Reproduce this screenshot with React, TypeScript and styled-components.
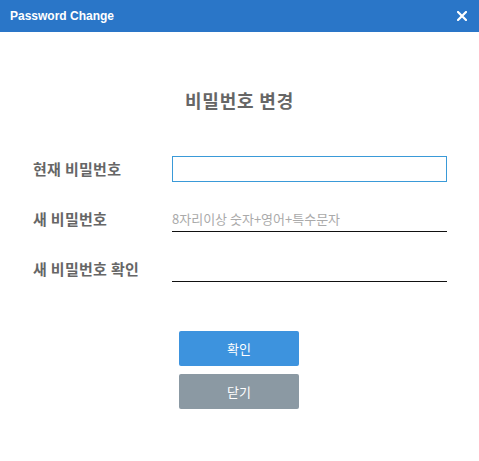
import React from "react";
import styled, { createGlobalStyle } from "styled-components";

const GlobalStyle = createGlobalStyle`
  html, body { margin: 0; padding: 0; background: #ffffff; }
  body { font-family: "Noto Sans CJK KR", "Noto Sans", sans-serif; }
  * { box-sizing: border-box; }
`;

const Dialog = styled.div`
  width: 479px;
  height: 461px;
  background: #fff;
  display: flex;
  flex-direction: column;
`;

const Header = styled.div`
  height: 32px;
  background: #2a76c8;
  display: flex;
  align-items: center;
  justify-content: space-between;
  padding: 0 10px 0 10px;
`;

const HeaderTitle = styled.div`
  font-family: "Liberation Sans", Arial, sans-serif;
  font-weight: bold;
  font-size: 12px;
  color: #ffffff;
`;

const CloseButton = styled.button`
  width: 14px;
  height: 14px;
  padding: 0;
  border: none;
  background: transparent;
  display: flex;
  align-items: center;
  justify-content: center;
  cursor: pointer;
`;

const Body = styled.div`
  display: flex;
  flex-direction: column;
  align-items: center;
  padding-top: 56px;
`;

const Title = styled.h2`
  margin: 0;
  height: 24px;
  line-height: 24px;
  font-size: 18px;
  letter-spacing: 0.8px;
  font-weight: bold;
  color: #666666;
`;

const Form = styled.div`
  width: 100%;
  margin-top: 44px;
  padding: 0 32px 0 33px;
  display: flex;
  flex-direction: column;
  gap: 24px;
`;

const Row = styled.div`
  display: flex;
  align-items: center;
  height: 26px;
`;

const Label = styled.label`
  width: 139px;
  font-size: 15px;
  font-weight: bold;
  color: #666666;
  line-height: 20px;
  letter-spacing: 0.3px;
`;

const Input = styled.input<{ $boxed?: boolean }>`
  width: 275px;
  height: 26px;
  padding: 0;
  font-family: "Noto Sans CJK KR", "Noto Sans", sans-serif;
  font-size: 13px;
  color: #333;
  outline: none;
  background: transparent;
  border: none;
  ${(p) =>
    p.$boxed
      ? `border: 1px solid #3a9ad8;`
      : `border-bottom: 1px solid #111111;`}

  &::placeholder {
    color: #aaaaaa;
  }
`;

const Buttons = styled.div`
  margin-top: 49px;
  display: flex;
  flex-direction: column;
  gap: 8px;
  padding-right: 1px;
`;

const ActionButton = styled.button<{ $variant: "primary" | "secondary" }>`
  width: 120px;
  height: 35px;
  border: none;
  border-radius: 2px;
  background: ${(p) => (p.$variant === "primary" ? "#3d93de" : "#8b99a3")};
  color: #ffffff;
  font-family: "Noto Sans CJK KR", "Noto Sans", sans-serif;
  font-size: 13px;
  cursor: pointer;
`;

export default function App() {
  return (
    <>
      <GlobalStyle />
      <Dialog>
        <Header>
          <HeaderTitle>Password Change</HeaderTitle>
          <CloseButton aria-label="close">
            <svg width="10" height="10" viewBox="0 0 10 10">
              <path d="M1 1 L9 9 M9 1 L1 9" stroke="#ffffff" strokeWidth="2.2" strokeLinecap="square" />
            </svg>
          </CloseButton>
        </Header>
        <Body>
          <Title>비밀번호 변경</Title>
          <Form>
            <Row>
              <Label>현재 비밀번호</Label>
              <Input type="password" $boxed />
            </Row>
            <Row>
              <Label>새 비밀번호</Label>
              <Input type="password" placeholder="8자리이상 숫자+영어+특수문자" />
            </Row>
            <Row>
              <Label>새 비밀번호 확인</Label>
              <Input type="password" />
            </Row>
          </Form>
          <Buttons>
            <ActionButton $variant="primary">확인</ActionButton>
            <ActionButton $variant="secondary">닫기</ActionButton>
          </Buttons>
        </Body>
      </Dialog>
    </>
  );
}
